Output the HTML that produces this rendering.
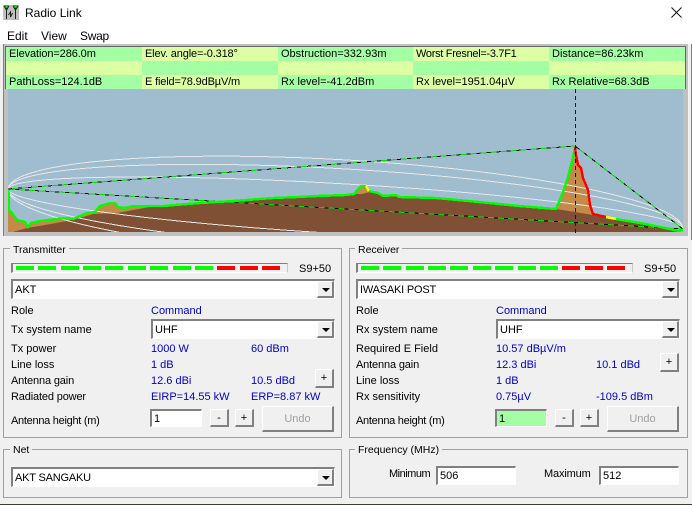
<!DOCTYPE html>
<html><head><meta charset="utf-8"><title>Radio Link</title>
<style>
html,body{margin:0;padding:0}
body{width:692px;height:505px;position:relative;overflow:hidden;background:#f0f0f0;font-family:"Liberation Sans",sans-serif;font-size:11px;color:#000}
div,span{position:absolute;box-sizing:border-box}
.t{white-space:nowrap;line-height:14px;height:14px;margin-top:1px}
.b{color:#0000c8}
.g{background:#a4ffa4}.y{background:#dcffa4}
.cell{height:14px;line-height:15px;white-space:nowrap;padding-left:3px;width:136px}
.box{border:1px solid #a0a0a0}
.lg{background:#f0f0f0;padding:0 3px;line-height:14px;height:14px;white-space:nowrap;font-size:10.5px;margin-top:1px}
.sunk{background:#fff;border-top:2px solid #808080;border-left:2px solid #808080;border-right:1px solid #fff;border-bottom:1px solid #fff;line-height:18px;padding-left:2px;white-space:nowrap;font-size:11px}
.btn{background:#f0f0f0;border-top:1px solid #fff;border-left:1px solid #fff;border-right:2px solid #808080;border-bottom:2px solid #808080;text-align:center;line-height:16px;font-size:11px;padding:0}
.arr{left:4px;top:6px;width:0;height:0;border-left:4px solid transparent;border-right:4px solid transparent;border-top:4px solid #000}
.m{background:#f0f0f0;border-top:1px solid #808080;border-left:2px solid #808080;border-right:1px solid #c8c8c8;border-bottom:1px solid #fff;height:10px;width:277px}
.s{top:2px;height:4px;width:18px}
.e{line-height:16px}
.u{color:#a0a0a0;line-height:25px}
</style></head><body>
<div style="left:0;top:0;width:692px;height:44px;background:#fff"></div>
<svg style="position:absolute;left:3px;top:5px" width="16" height="15" viewBox="0 0 16 15">
<rect width="16" height="15" fill="#c0c0c0"/>
<path d="M1 0h5L4 4H3zM10 0h5l-2 4h-1z" fill="#00d800"/>
<path d="M3.500 3V14M12.500 3V14M1 1l2.500 4L6 1M10 1l2.500 4L15 1M5.500 10l2-3v5l2-4" fill="none" stroke="#202020" stroke-width="1"/>
</svg>
<div class="t" style="left:25px;top:5px;font-size:12px">Radio Link</div>
<svg style="position:absolute;left:671px;top:7px" width="11" height="11"><path d="M.5.500l10 10M10.500.500l-10 10" stroke="#111" stroke-width="1" fill="none"/></svg>
<div class="t" style="left:7px;top:28px;font-size:12px">Edit</div>
<div class="t" style="left:41px;top:28px;font-size:12px">View</div>
<div class="t" style="left:80px;top:28px;font-size:12px;letter-spacing:-.3px">Swap</div>

<!-- top panel -->
<div style="left:3px;top:44px;width:685px;height:192px;background:#c0c0c0;border-left:1px solid #808080"></div>
<div style="left:5px;top:46px;width:681px;height:43px;background:#666;"></div>
<div class="cell g" style="left:6px;top:47px;letter-spacing:-.1px">Elevation=286.0m</div>
<div class="cell y" style="left:142px;top:47px;letter-spacing:-.15px">Elev. angle=-0.318°</div>
<div class="cell g" style="left:278px;top:47px">Obstruction=332.93m</div>
<div class="cell y" style="left:413px;top:47px;letter-spacing:-.3px">Worst Fresnel=-3.7F1</div>
<div class="cell g" style="left:549px;top:47px">Distance=86.23km</div>
<div class="cell y" style="left:6px;top:61px"></div>
<div class="cell g" style="left:142px;top:61px"></div>
<div class="cell y" style="left:278px;top:61px"></div>
<div class="cell g" style="left:413px;top:61px"></div>
<div class="cell y" style="left:549px;top:61px"></div>
<div class="cell g" style="left:6px;top:75px">PathLoss=124.1dB</div>
<div class="cell y" style="left:142px;top:75px;letter-spacing:-.15px">E field=78.9dBµV/m</div>
<div class="cell g" style="left:278px;top:75px">Rx level=-41.2dBm</div>
<div class="cell y" style="left:413px;top:75px">Rx level=1951.04µV</div>
<div class="cell g" style="left:549px;top:75px">Rx Relative=68.3dB</div>

<!-- chart -->
<svg style="position:absolute;left:0;top:0" width="692" height="240" viewBox="0 0 692 240">
<defs><clipPath id="c"><rect x="8" y="89" width="675" height="143"/></clipPath></defs>
<g clip-path="url(#c)">
<rect x="8" y="89" width="675" height="143" fill="#a0bccf"/>
<polygon fill="#c48a48" points="8,232 8,190 9,210 12,213 17,220 25,222 28,227 31,223 40,221 48,220 67,218 73,219 87,213 95,212 100,206 110,203 115,203 118,207 125,208 133,206 148,206 163,206 200,203 233,201 273,198 298,197 317,196 346,195 354,194 361,186 366,186 369,191 378,193 383,196 396,195 399,197 436,198 479,202 519,206 556,209 563,192 568,177 573,157 575,147 576,155 578,165 581,168 583,178 588,190 590,205 593,214 606,217 616,219 646,224 679,231 683,232"/>
<polygon fill="#7f5033" points="13,232 27,228 45,225 67,221 80,218 93,214 117,213 133,210 150,207 163,206 200,203 233,201 273,198 298,197 317,196 346,195 354,194 362,194 370,192 378,193 383,196 396,195 399,197 436,198 479,202 519,206 556,209 575,212 593,215 606,217 616,219 646,224 679,231 683,232"/>
<g fill="none" stroke="#e6e8ea" stroke-width="1" shape-rendering="crispEdges">
<ellipse cx="345.500" cy="209" rx="338" ry="25" transform="rotate(3.390 345.500 209)"/>
<ellipse cx="345.500" cy="209" rx="338" ry="40" transform="rotate(3.390 345.500 209)"/>
<ellipse cx="345.500" cy="209" rx="338" ry="49" transform="rotate(3.390 345.500 209)"/>
</g>
<g fill="none" stroke-linejoin="miter" shape-rendering="crispEdges">
<path d="M8 189L575 146L683 229L8 189" stroke="#00e000" stroke-width="1"/>
<path d="M8 189L575 146L683 229L8 189" stroke="#000" stroke-width="1" stroke-dasharray="4 6"/>
<path d="M8.500 190L9 210 12 213 17 220 25 222 28 227 31 223 40 221 48 220 67 218 73 219 87 213 95 212 100 206 110 203 115 203 118 207 125 208 133 206 148 206 163 206 200 203 233 201 273 198 298 197 317 196 346 195 354 194 361 186 366 186" stroke="#00ff00" stroke-width="2.400"/>
<path d="M366 186L369 191" stroke="#ffff00" stroke-width="2.400"/>
<path d="M369 191L378 193 383 196 396 195 399 197 436 198 479 202 519 206 556 209 563 192 568 177 573 157 575 147" stroke="#00ff00" stroke-width="2.400"/>
<path d="M575 147L576 155 578 165 581 168 583 178 588 190 590 205 593 214 606 217" stroke="#ff0000" stroke-width="2.400"/>
<path d="M606 217L616 219" stroke="#ffff00" stroke-width="2.400"/>
<path d="M616 219L646 224 679 231 683 230" stroke="#00ff00" stroke-width="2.400"/>
</g>
</g>
<path d="M575.500 89V236" stroke="#0000c8" stroke-width="1" stroke-dasharray="4 3" fill="none"/>
<rect x="691" y="44" width="1" height="461" fill="#808080"/>
</svg>

<!-- Transmitter -->
<div class="box" style="left:3px;top:248px;width:339px;height:190px"></div>
<div class="lg" style="left:10px;top:242px">Transmitter</div>
<div class="m" style="left:11px;top:263px">
<div class="s" style="left:3px;background:#0f0"></div><div class="s" style="left:25px;background:#0f0"></div><div class="s" style="left:48px;background:#0f0"></div><div class="s" style="left:70px;background:#0f0"></div><div class="s" style="left:92px;background:#0f0"></div><div class="s" style="left:115px;background:#0f0"></div><div class="s" style="left:137px;background:#0f0"></div><div class="s" style="left:160px;background:#0f0"></div><div class="s" style="left:182px;background:#0f0"></div><div class="s" style="left:204px;background:#f00"></div><div class="s" style="left:227px;background:#f00"></div><div class="s" style="left:249px;background:#f00"></div>
</div>
<div class="t" style="left:299px;top:261px">S9+50</div>
<div class="sunk" style="left:11px;top:279px;width:324px;height:20px">AKT<div class="btn" style="left:304px;top:0;width:17px;height:17px"><div class="arr"></div></div></div>
<div class="t" style="left:11px;top:303px">Role</div><div class="t b" style="left:151px;top:303px">Command</div>
<div class="t" style="left:11px;top:322px">Tx system name</div>
<div class="sunk" style="left:151px;top:319px;width:184px;height:20px">UHF<div class="btn" style="left:164px;top:0;width:17px;height:17px"><div class="arr"></div></div></div>
<div class="t" style="left:11px;top:341px">Tx power</div><div class="t b" style="left:151px;top:341px">1000 W</div><div class="t b" style="left:251px;top:341px">60 dBm</div>
<div class="t" style="left:11px;top:357px">Line loss</div><div class="t b" style="left:151px;top:357px">1 dB</div>
<div class="t" style="left:11px;top:373px;letter-spacing:-.15px">Antenna gain</div><div class="t b" style="left:151px;top:373px">12.6 dBi</div><div class="t b" style="left:251px;top:373px">10.5 dBd</div>
<div class="btn" style="left:315px;top:369px;width:19px;height:19px">+</div>
<div class="t" style="left:11px;top:389px;letter-spacing:-.15px">Radiated power</div><div class="t b" style="left:151px;top:389px">EIRP=14.55 kW</div><div class="t b" style="left:251px;top:389px">ERP=8.87 kW</div>
<div class="t" style="left:11px;top:413px;letter-spacing:-.28px">Antenna height (m)</div>
<div class="sunk e" style="left:150px;top:409px;width:52px;height:18px">1</div>
<div class="btn" style="left:210px;top:409px;width:19px;height:18px">-</div>
<div class="btn" style="left:235px;top:409px;width:19px;height:18px">+</div>
<div class="btn u" style="left:262px;top:406px;width:72px;height:26px">Undo</div>

<!-- Net -->
<div class="box" style="left:3px;top:449px;width:339px;height:49px"></div>
<div class="lg" style="left:10px;top:442px">Net</div>
<div class="sunk" style="left:11px;top:467px;width:324px;height:20px;"><span style="position:static;letter-spacing:-.2px">AKT SANGAKU</span><div class="btn" style="left:304px;top:0;width:17px;height:17px"><div class="arr"></div></div></div>

<!-- Receiver -->
<div class="box" style="left:349px;top:248px;width:339px;height:190px"></div>
<div class="lg" style="left:355px;top:242px">Receiver</div>
<div class="m" style="left:356px;top:263px">
<div class="s" style="left:3px;background:#0f0"></div><div class="s" style="left:25px;background:#0f0"></div><div class="s" style="left:48px;background:#0f0"></div><div class="s" style="left:70px;background:#0f0"></div><div class="s" style="left:92px;background:#0f0"></div><div class="s" style="left:115px;background:#0f0"></div><div class="s" style="left:137px;background:#0f0"></div><div class="s" style="left:160px;background:#0f0"></div><div class="s" style="left:182px;background:#0f0"></div><div class="s" style="left:204px;background:#f00"></div><div class="s" style="left:227px;background:#f00"></div><div class="s" style="left:249px;background:#f00"></div>
</div>
<div class="t" style="left:644px;top:261px">S9+50</div>
<div class="sunk" style="left:356px;top:279px;width:324px;height:20px"><span style="position:static;letter-spacing:-.2px">IWASAKI POST</span><div class="btn" style="left:304px;top:0;width:17px;height:17px"><div class="arr"></div></div></div>
<div class="t" style="left:356px;top:303px">Role</div><div class="t b" style="left:496px;top:303px">Command</div>
<div class="t" style="left:356px;top:322px">Rx system name</div>
<div class="sunk" style="left:496px;top:319px;width:184px;height:20px">UHF<div class="btn" style="left:164px;top:0;width:17px;height:17px"><div class="arr"></div></div></div>
<div class="t" style="left:356px;top:341px">Required E Field</div><div class="t b" style="left:496px;top:341px">10.57 dBµV/m</div>
<div class="t" style="left:356px;top:357px;letter-spacing:-.15px">Antenna gain</div><div class="t b" style="left:496px;top:357px">12.3 dBi</div><div class="t b" style="left:596px;top:357px">10.1 dBd</div>
<div class="btn" style="left:660px;top:353px;width:19px;height:19px">+</div>
<div class="t" style="left:356px;top:373px">Line loss</div><div class="t b" style="left:496px;top:373px">1 dB</div>
<div class="t" style="left:356px;top:389px">Rx sensitivity</div><div class="t b" style="left:496px;top:389px">0.75µV</div><div class="t b" style="left:596px;top:389px">-109.5 dBm</div>
<div class="t" style="left:356px;top:413px;letter-spacing:-.28px">Antenna height (m)</div>
<div class="sunk e" style="left:495px;top:409px;width:52px;height:18px;background:#a4ffa4">1</div>
<div class="btn" style="left:555px;top:409px;width:19px;height:18px">-</div>
<div class="btn" style="left:580px;top:409px;width:19px;height:18px">+</div>
<div class="btn u" style="left:607px;top:406px;width:72px;height:26px">Undo</div>

<!-- Frequency -->
<div class="box" style="left:349px;top:449px;width:339px;height:49px"></div>
<div class="lg" style="left:355px;top:442px">Frequency (MHz)</div>
<div class="t" style="left:389px;top:466px;letter-spacing:-.5px">Minimum</div>
<div class="sunk e" style="left:436px;top:466px;width:80px;height:19px;line-height:17px">506</div>
<div class="t" style="left:544px;top:466px;letter-spacing:-.15px">Maximum</div>
<div class="sunk e" style="left:599px;top:466px;width:80px;height:19px;line-height:17px">512</div>

<div style="left:0;top:504px;width:692px;height:1px;background:#404020"></div>
</body></html>
